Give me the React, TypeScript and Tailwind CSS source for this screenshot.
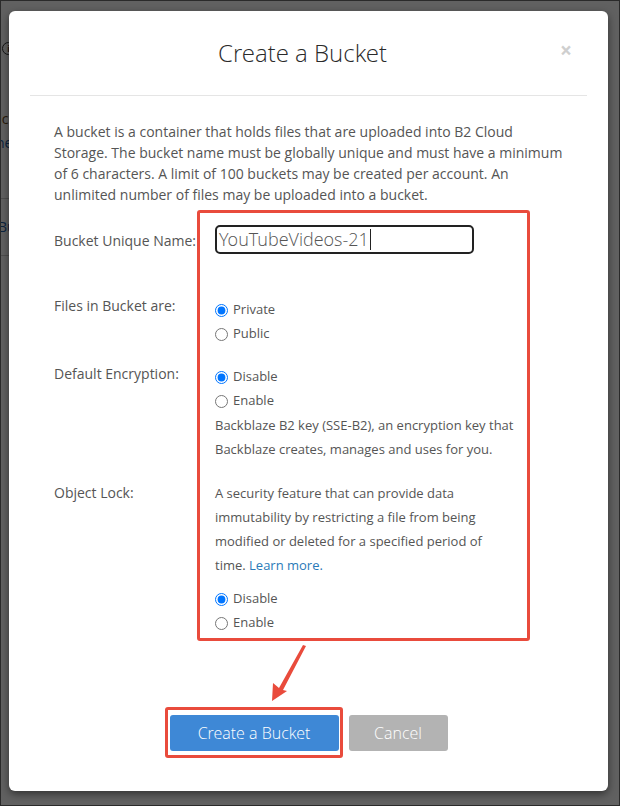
import React from 'react'

const font = { fontFamily: '"Open Sans", "Noto Sans", Arial, sans-serif' }
const light = { fontFamily: '"Open Sans Light", "Open Sans", "Noto Sans", Arial, sans-serif' }

function Radio({ label, checked, name }: { label: string; checked?: boolean; name: string }) {
  return (
    <label className="flex h-[24px] items-center gap-[5px] text-[13px] text-[#555]">
      <input type="radio" name={name} defaultChecked={checked} className="m-0 h-[13px] w-[13px]" />
      {label}
    </label>
  )
}

export default function App() {
  return (
    <div className="relative h-[806px] w-[620px] overflow-hidden bg-white" style={font}>
      {/* page behind the dialog */}
      <div className="absolute left-[2px] top-[42px] flex h-[13px] w-[13px] items-center justify-center rounded-full border border-[#333] text-[9px] font-bold text-[#333]">i</div>
      <div className="absolute left-[-6px] top-[108px] text-[14px] text-[#6b4a1a]">ack</div>
      <div className="absolute left-[-4px] top-[132px] text-[14px] text-[#1f5fa8]">ne</div>
      <div className="absolute left-0 top-[198px] h-px w-[20px] bg-[#ccc]" />
      <div className="absolute left-[-2px] top-[216px] text-[14px] text-[#1f5fa8]">Bu</div>
      <div className="absolute left-0 top-[255px] h-px w-[20px] bg-[#ccc]" />
      <div className="absolute left-0 top-[801px] flex w-full text-[16px] font-bold text-[#1a2b4a]">
        <span className="ml-[96px]">Support</span>
        <span className="ml-[150px]">Contact</span>
        <span className="ml-[135px]">Feedback</span>
      </div>

      {/* overlay */}
      <div className="absolute inset-0 border border-[#2a2a2a] bg-[rgba(0,0,0,0.62)] pl-[8px] pt-[10px]">
        <div className="relative w-[599px] rounded-[6px] bg-white pb-[40px] shadow-[0_3px_9px_rgba(0,0,0,0.5)]">
          {/* header */}
          <div className="relative mx-[21px] flex h-[85px] items-center justify-center border-b border-[#e5e5e5] pr-[12px]">
            <h2 className="text-[24px] font-light leading-none text-[#2a2a2a]" style={light}>Create a Bucket</h2>
            <button className="absolute right-[15px] top-[29px] text-[21px] font-bold leading-none text-[#cfcfcf]">×</button>
          </div>

          {/* body */}
          <div className="pl-[45px] pr-[41px]">
            <p className="mt-[25px] text-[14px] leading-[21px] text-[#555]">
              A bucket is a container that holds files that are uploaded into B2 Cloud Storage. The bucket name must be
              globally unique and must have a minimum of 6 characters. A limit of 100 buckets may be created per
              account. An unlimited number of files may be uploaded into a bucket.
            </p>

            <div className="mt-[20px] flex items-start">
              <div className="mt-[6px] w-[161px] text-[14px] leading-[20px] text-[#555]">Bucket Unique Name:</div>
              <div
                className="flex h-[29px] w-[259px] items-center rounded-[5px] border-2 border-[#222] px-[2px] text-[18px] font-light text-[#555]"
                style={light}
              >
                YouTubeVideos-21
                <span className="ml-px h-[21px] w-px bg-[#222]" />
              </div>
            </div>

            <div className="mt-[42px] flex items-start">
              <div className="w-[161px] text-[14px] leading-[20px] text-[#555]">Files in Bucket are:</div>
              <div className="pt-[2px]">
                <Radio name="files" label="Private" checked />
                <Radio name="files" label="Public" />
              </div>
            </div>

            <div className="mt-[18px] flex items-start">
              <div className="w-[161px] text-[14px] leading-[20px] text-[#555]">Default Encryption:</div>
              <div className="w-[300px] pt-[1px]">
                <Radio name="enc" label="Disable" checked />
                <Radio name="enc" label="Enable" />
                <p className="text-[13px] leading-[24px] text-[#555]">
                  Backblaze B2 key (SSE-B2), an encryption key that Backblaze creates, manages and uses for you.
                </p>
              </div>
            </div>

            <div className="mt-[20px] flex items-start">
              <div className="mt-[2px] w-[161px] text-[14px] leading-[20px] text-[#555]">Object Lock:</div>
              <div className="w-[300px]">
                <p className="text-[13px] leading-[24px] text-[#555]">
                  A security feature that can provide data immutability by restricting a file from being modified or
                  deleted for a specified period of time. <a className="text-[#2a7ab8]">Learn more.</a>
                </p>
                <div className="mt-[10px]">
                  <Radio name="lock" label="Disable" checked />
                  <Radio name="lock" label="Enable" />
                </div>
              </div>
            </div>
          </div>

          {/* footer buttons */}
          <div className="mt-[80px] flex justify-center gap-[10px]" style={light}>
            <button className="h-[36px] w-[169px] rounded-[3px] bg-[#3e88d6] text-[16px] font-light text-white">Create a Bucket</button>
            <button className="h-[36px] w-[99px] rounded-[3px] bg-[#b3b3b3] text-[16px] font-light text-white">Cancel</button>
          </div>

          {/* annotations */}
          <div className="pointer-events-none absolute left-[188px] top-[199px] h-[431px] w-[333px] rounded-[3px] border-[3px] border-[#e94b3c]" />
          <div className="pointer-events-none absolute left-[156px] top-[696px] h-[51px] w-[178px] rounded-[3px] border-[3px] border-[#e94b3c]" />
          <svg className="pointer-events-none absolute left-[251px] top-[627px]" width="56" height="68" viewBox="0 0 56 68">
            <polygon points="12,63 13,45 19,50 43,7 46,8 23,52 27,53" fill="#e94b3c" />
          </svg>
        </div>
      </div>
    </div>
  )
}
